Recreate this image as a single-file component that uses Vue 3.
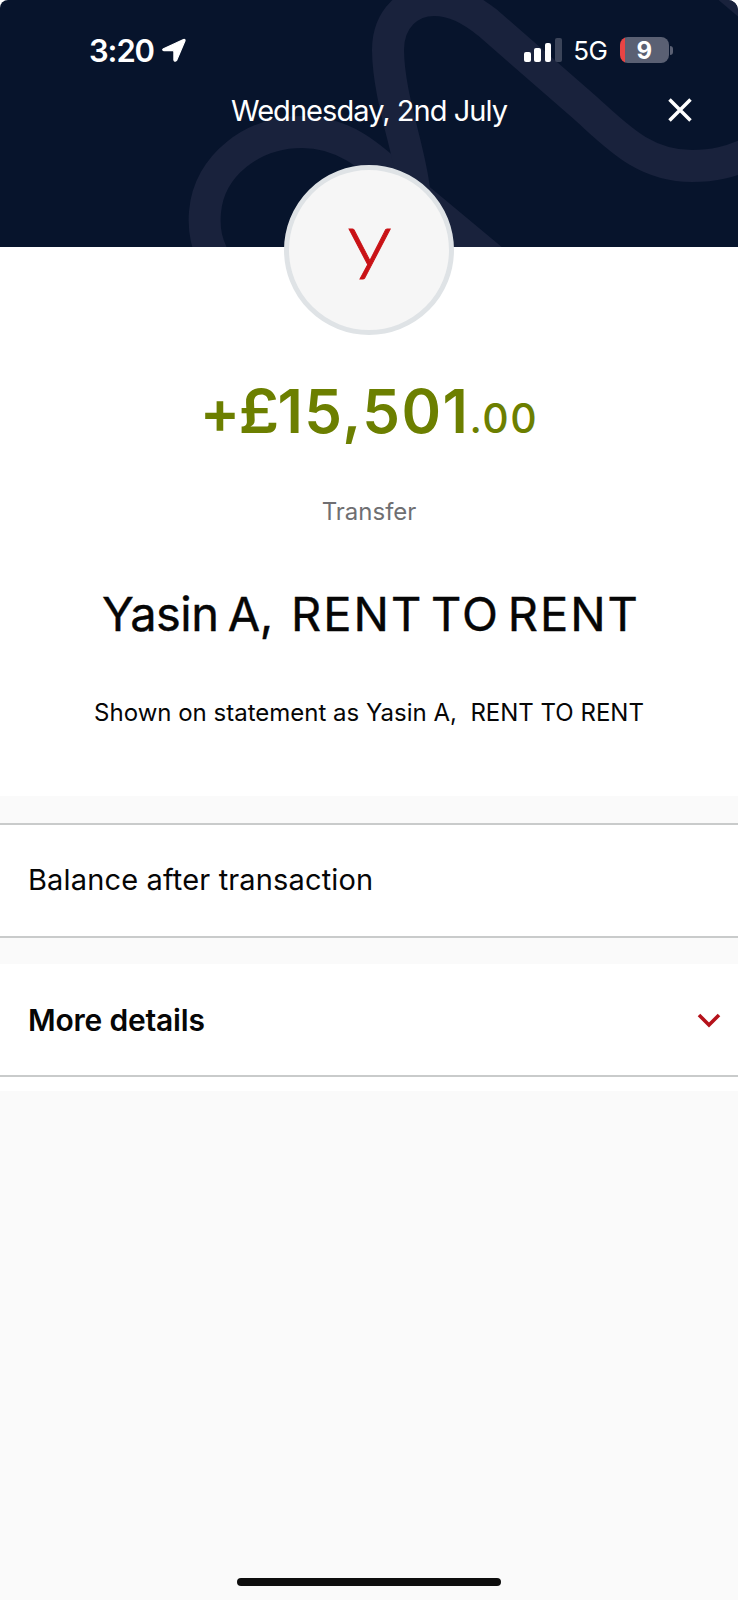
<script setup>
const date = 'Wednesday, 2nd July'
const name = 'Yasin A,\u00a0 '
const reference = 'RENT TO RENT'
const bars = [9.5, 13.5, 18.5, 23.5]
</script>

<template>
  <main class="screen">
    <header class="header">
      <svg class="swirl" width="738" height="247" viewBox="0 0 738 247" aria-hidden="true">
        <path d="M218 265C206 245 203.500 230 205 212C209 165 253 132 302 132C349 132 377 163 400 183L520 283" />
        <path d="M414 190C410 150 388.500 98 388 50C388 18 410 0 434 0C454 0 470 9 488 23L582 105C615 134 642 166 692 166C714 166 730 162 750 153" />
        <path d="M722 -18L760 14" />
      </svg>
      <div class="status">
        <span class="time">3:20</span>
        <svg class="arrow" width="24" height="24" viewBox="0 0 24 24"><path d="M1.500 10.700L21.500 1.500Q23.500 1 22.900 3L14.800 22Q12.700 24.500 11.900 22V13.600Q11.700 12.700 10.900 12.600L2 12.600Q-.3 11.800 1.500 10.700Z" fill="#fff" stroke="#fff" stroke-width="1.200" stroke-linejoin="round" /></svg>
        <div class="signal"><i v-for="(h, n) in bars" :key="n" :class="{ off: n === 3 }" :style="{ height: h + 'px' }"></i></div>
        <span class="network">5G</span>
        <div class="battery"><span>9</span></div>
        <i class="cap"></i>
      </div>
      <div class="titlebar">
        <span class="date">{{ date }}</span>
        <svg class="close" width="24" height="24" viewBox="0 0 24 24"><path d="M1.500 1.500L22.500 22.500M22.500 1.500L1.500 22.500" stroke="#fff" stroke-width="3.500" /></svg>
      </div>
    </header>
    <section class="summary">
      <div class="avatar"><span>y</span></div>
      <div class="amount"><span class="whole"><span class="sign">+</span><span class="currency">£</span>15,501</span><span class="pence">.00</span></div>
      <div class="kind"><span>Transfer</span></div>
      <h1><span class="name">{{ name }}</span><span class="ref">{{ reference }}</span></h1>
      <p><span>Shown on statement as {{ name }}{{ reference }}</span></p>
    </section>
    <section class="row balance"><span>Balance after transaction</span></section>
    <section class="row more">
      <span>More details</span>
      <svg width="24" height="16" viewBox="0 0 24 16"><path d="M2 3L12 13L22 3" fill="none" stroke="#b5121b" stroke-width="3.600" /></svg>
    </section>
    <div class="tail"></div>
    <div class="home"></div>
  </main>
</template>

<style>
body { margin: 0; background: #fff; }
</style>

<style scoped>
.screen { width: 738px; height: 1600px; display: flex; flex-direction: column; background: linear-gradient(#fff 0 247px, #fafafa 247px); font-family: Inter, "Liberation Sans", sans-serif; color: #060606; overflow: hidden; white-space: nowrap; }
.header { height: 247px; flex: none; background: #07142c; position: relative; color: #fff; box-sizing: border-box; padding-top: 30px; border-radius: 8px 10px 0 0; overflow: hidden; }
.swirl { position: absolute; inset: 0; fill: none; stroke: #19223c; stroke-width: 32; }
.status { position: relative; height: 40px; display: flex; align-items: center; padding-left: 89px; }
.time { font-size: 31px; font-weight: 600; width: 73px; letter-spacing: -1.1px; }
.signal { margin-left: 338px; display: flex; align-items: flex-end; gap: 3.500px; height: 23.500px; }
.signal i { width: 6.800px; border-radius: 2px; background: #fff; }
.signal i.off { background: #3b4459; }
.network { font-size: 26px; margin-left: 11.500px; width: 46.500px; padding-top: 1px; box-sizing: border-box; letter-spacing: -0.4px; }
.battery { width: 49px; height: 26px; border-radius: 8px; background: linear-gradient(90deg, #e84444 5px, #5a6073 5px); display: flex; align-items: center; justify-content: center; font-size: 24px; font-weight: 700; }
.cap { width: 3px; height: 9px; margin-left: 1px; border-radius: 0 4px 4px 0; background: #5a6073; }
.titlebar { position: relative; height: 40px; margin-top: 20px; display: flex; align-items: center; justify-content: flex-end; padding: 0 46px 0 231px; }
.date { font-size: 29px; margin-right: auto; letter-spacing: -0.95px; }
.summary { height: 549px; flex: none; background: #fff; display: flex; flex-direction: column; align-items: center; position: relative; }
.avatar { width: 170px; height: 170px; margin-top: -82px; box-sizing: border-box; border: 5px solid #dfe3e6; border-radius: 50%; background: #f6f6f6; display: flex; justify-content: center; align-items: center; flex: none; }
.avatar span { font: 300 74px/80px Lato, sans-serif; color: #c91216; transform: scaleX(1.2); margin: -25px 0 0 2px; -webkit-text-stroke: .8px #c91216; }
.amount { display: flex; align-items: baseline; color: #6c7f00; margin-top: 39px; height: 74px; line-height: 74px; }
.whole { font-size: 60px; font-weight: 600; letter-spacing: 1.500px; }
.sign { letter-spacing: -0.5px; }
.currency { display: inline-block; transform: scaleX(1.08); letter-spacing: 0; }
.pence { font-size: 41px; font-weight: 500; letter-spacing: 1.500px; }
.kind { font-size: 24px; line-height: 30px; margin-top: 49px; color: #6f6f72; }
h1 { font-size: 47px; line-height: 60px; font-weight: 400; margin: 57px 0 0; padding-left: 4px; white-space: pre; -webkit-text-stroke: .4px #060606; }
.name { letter-spacing: -0.5px; word-spacing: -3.500px; }
.ref { letter-spacing: 2px; word-spacing: -7.500px; }
p { font-size: 24px; line-height: 30px; margin: 54px 0 0; }
.row { background: #fff; box-sizing: border-box; flex: none; display: flex; align-items: center; padding-left: 28px; font-size: 29px; }
.balance { margin-top: 27px; height: 115px; border-top: 2px solid #c9cbcb; border-bottom: 2px solid #c9cbcb; padding-bottom: 2px; letter-spacing: .15px; }
.more { margin-top: 26px; height: 113px; border-bottom: 2px solid #c9cbcb; padding-top: 1px; font-size: 30px; font-weight: 600; letter-spacing: -0.2px; justify-content: space-between; padding-right: 17px; }
.tail { height: 14px; background: #fff; flex: none; }
.home { width: 264px; height: 8px; border-radius: 4px; background: #0d0d0d; margin: auto auto 14px; flex: none; }
</style>
